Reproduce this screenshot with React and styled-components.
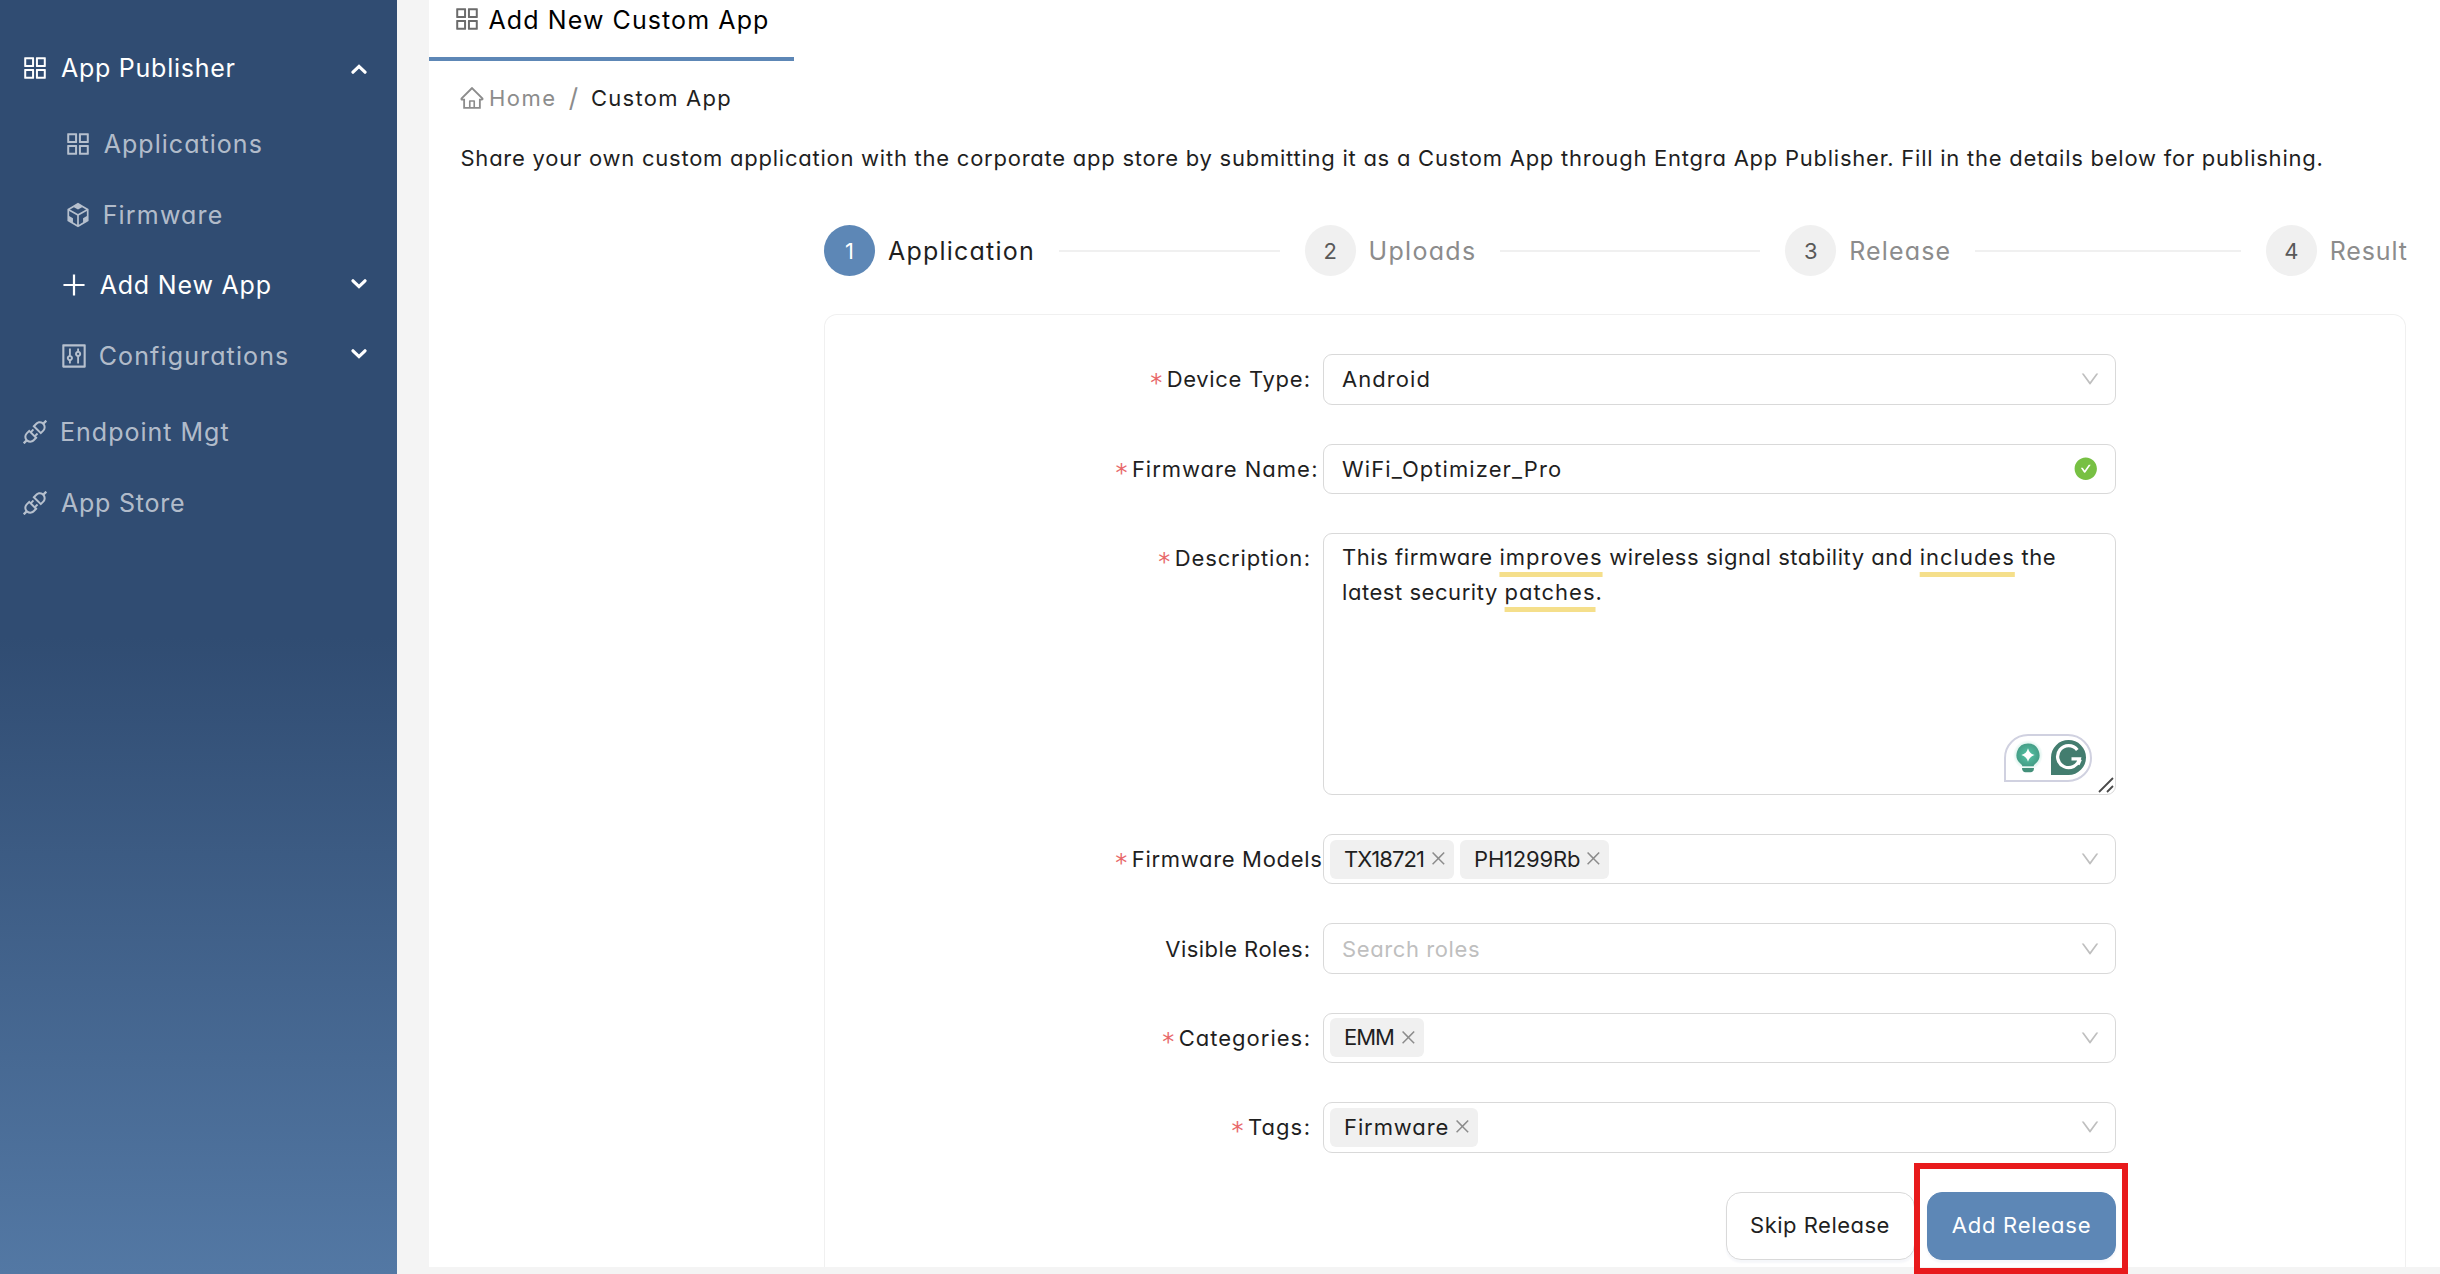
import React from 'react'
import styled, { createGlobalStyle, css } from 'styled-components'
import {
    AiFillCheckCircle,
    AiOutlineApi,
    AiOutlineAppstore,
    AiOutlineClose,
    AiOutlineCodeSandbox,
    AiOutlineControl,
    AiOutlineDown,
    AiOutlineHome,
    AiOutlinePlus,
} from 'react-icons/ai'

const PRIMARY = '#5d87b6'
const TEXT = '#1f1f1f'
const BORDER = '#d9d9d9'
const LIGHT = '#f0f0f0'

const GlobalStyle = createGlobalStyle`
    * {
        box-sizing: border-box;
    }

    body {
        background: #f4f4f4;
        color: ${TEXT};
        font-family: Inter, 'Noto Sans', sans-serif;
        font-feature-settings: 'cv11';
        font-size: 22px;
        line-height: 36px;
        margin: 0;
        overflow: hidden;
    }

    svg {
        display: block;
        flex: none;
    }
`

const Spaced = styled.span`
    letter-spacing: ${({ $ls }) => $ls || 0}px;
    white-space: nowrap;
`

const Layout = styled.div`
    display: flex;
    height: 1274px;
    width: 2440px;
`

const Sidebar = styled.nav`
    background: linear-gradient(180deg, #304c72 0%, #304c72 50%, #5378a4 100%);
    display: flex;
    flex: none;
    flex-direction: column;
    gap: 6.4px;
    padding-top: 35.6px;
    width: 397px;
`

const SubMenu = styled.div`
    display: flex;
    flex-direction: column;
    gap: 6.4px;
    padding: 6.4px 0;
`

const MenuItem = styled.div`
    align-items: center;
    color: ${({ $active }) => ($active ? '#fff' : 'rgba(255, 255, 255, 0.65)')};
    display: flex;
    font-size: 25px;
    gap: ${({ $gap }) => $gap || 11}px;
    height: 64px;
    padding-left: ${({ $indent }) => $indent || 20}px;
    padding-right: 30.5px;
`

const Arrow = styled.svg`
    color: #fff;
    margin-left: auto;
    ${({ $up }) =>
        $up
            ? css`
                  margin-top: 2px;
              `
            : css`
                  margin-bottom: 3px;
                  transform: rotate(180deg);
              `}
`

const Page = styled.main`
    background: #fff;
    display: flex;
    flex: 1;
    flex-direction: column;
    height: 1267px;
    margin-left: 32px;
`

const Tab = styled.div`
    align-items: center;
    border-bottom: 4px solid ${PRIMARY};
    color: #000;
    display: flex;
    font-size: 25px;
    gap: 6.5px;
    height: 61px;
    padding: 0 0 18px 23px;
    width: 365px;

    svg {
        color: #6b6b6b;
        margin-bottom: 1px;
    }
`

const Breadcrumb = styled.div`
    align-items: center;
    color: #8c8c8c;
    display: flex;
    height: 36px;
    margin: 19px 0 0 30px;

    svg {
        margin-right: 4px;
    }

    b {
        color: ${TEXT};
        font-weight: 400;
    }
`

const Slash = styled.span`
    font-size: 26px;
    margin: 0 13px 0 12px;
`

const Intro = styled.p`
    margin: 24px 0 0 31.5px;
`

const Steps = styled.div`
    display: grid;
    grid-template-columns: repeat(3, 480.6px) auto;
    height: 51px;
    margin: 49px 0 0 395px;
`

const Step = styled.div`
    align-items: center;
    color: ${({ $active }) => ($active ? TEXT : '#8c8c8c')};
    display: flex;
    font-size: 25px;
`

const StepNumber = styled.div`
    align-items: center;
    background: ${({ $active }) => ($active ? PRIMARY : LIGHT)};
    border-radius: 50%;
    color: ${({ $active }) => ($active ? '#fff' : '#595959')};
    display: flex;
    flex: none;
    font-size: 22px;
    height: 51px;
    justify-content: center;
    margin-right: 13px;
    width: 51px;
`

const StepLine = styled.div`
    background: ${LIGHT};
    flex: 1;
    height: 2px;
    margin: 0 25px 0 24px;
`

const Card = styled.section`
    border: 1px solid ${LIGHT};
    border-bottom: 0;
    border-radius: 13px 13px 0 0;
    display: flex;
    flex: 1;
    flex-direction: column;
    gap: 39px;
    margin: 38px 34px 0 395px;
    padding-top: 39.2px;
`

const FormRow = styled.div`
    display: flex;
`

const Label = styled.div`
    align-items: center;
    display: flex;
    flex: none;
    height: 50.4px;
    justify-content: flex-end;
    padding-right: ${({ $end }) => $end}px;
    width: 498px;
`

const Required = styled.span`
    color: #e8686a;
    font-family: 'DejaVu Sans', sans-serif;
    font-size: 24px;
    line-height: 24px;
    margin: 8px 4.5px 0 0;
`

const Colon = styled.span`
    margin-left: 0.5px;
`

const Field = styled.div`
    align-items: center;
    border: 1px solid ${BORDER};
    border-radius: 9px;
    display: flex;
    gap: 6px;
    height: 50.4px;
    padding: 0 ${({ $valid }) => ($valid ? 16.5 : 14.5)}px 0 ${({ $tags }) => ($tags ? 6 : 18)}px;
    width: 793px;

    > svg {
        color: ${({ $valid }) => ($valid ? '#77c043' : '#bfbfbf')};
        margin-left: auto;
    }
`

const Placeholder = styled.span`
    color: #bfbfbf;
`

const Tag = styled.span`
    align-items: center;
    background: ${LIGHT};
    border-radius: 6px;
    display: flex;
    height: 39px;
    justify-content: space-between;
    padding: 0 6px 1px 14px;
    width: ${({ $width }) => $width}px;

    svg {
        color: #8c8c8c;
    }
`

const TextArea = styled.div`
    border: 1px solid ${BORDER};
    border-radius: 9px;
    height: 262px;
    letter-spacing: 0.55px;
    line-height: 35px;
    padding: 6.5px 18px;
    position: relative;
    width: 793px;
`

const Hint = styled.span`
    letter-spacing: 1px;
    text-decoration: underline 5px #f5df8b;
    text-decoration-skip-ink: none;
    text-underline-offset: 7px;
`

const Assistant = styled.div`
    align-items: center;
    background: #fff;
    border: 2px solid #d0d1e0;
    border-radius: 24px 24px 24px 0;
    bottom: 12px;
    display: flex;
    height: 48px;
    justify-content: space-between;
    padding: 0 4px 0 7px;
    position: absolute;
    right: 23px;
    width: 88px;
`

const ResizeGrip = styled.svg`
    bottom: 0;
    position: absolute;
    right: 0;
`

const Actions = styled.div`
    display: flex;
    gap: 12.5px;
    justify-content: flex-end;
    width: 1291px;
`

const Button = styled.div`
    align-items: center;
    background: ${({ $primary }) => ($primary ? PRIMARY : '#fff')};
    border: 1px solid ${({ $primary }) => ($primary ? PRIMARY : BORDER)};
    border-radius: 15px;
    box-shadow: 0 3px 2px rgba(5, 55, 120, 0.04);
    color: ${({ $primary }) => ($primary ? '#fff' : TEXT)};
    display: flex;
    height: 68px;
    justify-content: center;
    padding-bottom: 1px;
    width: 189px;
`

const Highlight = styled.div`
    position: relative;

    &::after {
        border: 6px solid #e81a1c;
        content: '';
        inset: -29px -12px -14px -13px;
        position: absolute;
    }
`

const MENU_ARROW = 'M2 8.2L8 2.4L14 8.2'

const MenuArrow = ({ up }) => (
    <Arrow $up={up} width="16" height="10" viewBox="0 0 16 10" fill="none">
        <path d={MENU_ARROW} stroke="currentColor" strokeWidth="3.2" strokeLinecap="round" />
    </Arrow>
)

const BulbIcon = () => (
    <svg width="30" height="36" viewBox="0 0 30 36">
        <defs>
            <radialGradient id="bulb">
                <stop offset="0" stopColor="#55c6a6" />
                <stop offset="1" stopColor="#459e87" />
            </radialGradient>
            <radialGradient id="glow">
                <stop offset="0.7" stopColor="#55c6a6" stopOpacity="0.25" />
                <stop offset="1" stopColor="#55c6a6" stopOpacity="0" />
            </radialGradient>
        </defs>
        <circle cx="15" cy="15" r="15" fill="url(#glow)" />
        <path d="M15 3.5a11.5 11.5 0 0 1 7.6 20.1c-1.2 1-1.6 1.4-1.9 2.6H9.3c-.3-1.2-.7-1.6-1.9-2.6A11.5 11.5 0 0 1 15 3.5z" fill="url(#bulb)" />
        <path d="M15 8.2q1.4 5.4 6.6 6.8q-5.2 1.4-6.6 6.8q-1.4-5.4-6.6-6.8q5.2-1.4 6.6-6.8z" fill="#fff" />
        <path d="M9 28h12c0 2.600-1.400 4.200-3.400 4.200h-5.200C10.400 32.200 9 30.600 9 28z" fill="#43907a" />
    </svg>
)

const AssistantLogo = () => (
    <svg width="35" height="35" viewBox="0 0 35 35" fill="none">
        <path d="M17.500 0A17.500 17.500 0 0 1 17.500 35H0V17.500A17.500 17.500 0 0 1 17.500 0z" fill="#437d6f" />
        <path d="M26.300 9.900A11 11 0 1 0 28.400 18.800H20.500" stroke="#fff" strokeWidth="3.300" />
        <path d="M29.600 19.500L27.300 24.800" stroke="#fff" strokeWidth="2.600" />
    </svg>
)

const FormItem = ({ label, ls, required = true, colon = true, end = 13, children }) => (
    <FormRow>
        <Label $end={end}>
            {required && <Required>*</Required>}
            <Spaced $ls={ls}>{label}</Spaced>
            {colon && <Colon>:</Colon>}
        </Label>
        {children}
    </FormRow>
)

const SelectTag = ({ label, ls, width }) => (
    <Tag $width={width}>
        <Spaced $ls={ls}>{label}</Spaced>
        <AiOutlineClose size={18.75} />
    </Tag>
)

const STEPS = [
    { title: 'Application', ls: 1.22 },
    { title: 'Uploads', ls: 1.3 },
    { title: 'Release', ls: 1.16 },
    { title: 'Result', ls: 0.86 },
]

const App = () => (
    <Layout>
        <GlobalStyle />
        <Sidebar>
            <MenuItem $active>
                <AiOutlineAppstore size={30} />
                <Spaced $ls={0.74}>App Publisher</Spaced>
                <MenuArrow up />
            </MenuItem>
            <SubMenu>
                <MenuItem $indent={62.7}>
                    <AiOutlineAppstore size={30} />
                    <Spaced $ls={1.04}>Applications</Spaced>
                </MenuItem>
                <MenuItem $indent={62.7} $gap={10}>
                    <AiOutlineCodeSandbox size={30} />
                    <Spaced $ls={1.17}>Firmware</Spaced>
                </MenuItem>
                <MenuItem $indent={58.7} $active>
                    <AiOutlinePlus size={30} />
                    <Spaced $ls={0.81}>Add New App</Spaced>
                    <MenuArrow />
                </MenuItem>
                <MenuItem $indent={58.7} $gap={10}>
                    <AiOutlineControl size={30} />
                    <Spaced $ls={1.13}>Configurations</Spaced>
                    <MenuArrow />
                </MenuItem>
            </SubMenu>
            <MenuItem $gap={10}>
                <AiOutlineApi size={30} />
                <Spaced $ls={1.01}>Endpoint Mgt</Spaced>
            </MenuItem>
            <MenuItem>
                <AiOutlineApi size={30} />
                <Spaced $ls={0.77}>App Store</Spaced>
            </MenuItem>
        </Sidebar>
        <Page>
            <Tab>
                <AiOutlineAppstore size={30} />
                <Spaced $ls={1.09}>Add New Custom App</Spaced>
            </Tab>
            <Breadcrumb>
                <AiOutlineHome size={26} />
                <Spaced $ls={1.5}>Home</Spaced>
                <Slash>/</Slash>
                <Spaced as="b" $ls={1.25}>
                    Custom App
                </Spaced>
            </Breadcrumb>
            <Intro>
                <Spaced $ls={0.755}>
                    Share your own custom application with the corporate app store by submitting it as a Custom App
                    through Entgra App Publisher. Fill in the details below for publishing.
                </Spaced>
            </Intro>
            <Steps>
                {STEPS.map(({ title, ls }, i) => (
                    <Step key={title} $active={i === 0}>
                        <StepNumber $active={i === 0}>{i + 1}</StepNumber>
                        <Spaced $ls={ls}>{title}</Spaced>
                        {i < STEPS.length - 1 && <StepLine />}
                    </Step>
                ))}
            </Steps>
            <Card>
                <FormItem label="Device Type" ls={0.68}>
                    <Field>
                        <Spaced $ls={1.07}>Android</Spaced>
                        <AiOutlineDown size={22} />
                    </Field>
                </FormItem>
                <FormItem label="Firmware Name" ls={0.95} end={5.5}>
                    <Field $valid>
                        <Spaced $ls={1.08}>WiFi_Optimizer_Pro</Spaced>
                        <AiFillCheckCircle size={25.5} />
                    </Field>
                </FormItem>
                <FormItem label="Description" ls={0.85}>
                    <TextArea>
                        This firmware <Hint>improves</Hint> wireless signal stability and <Hint>includes</Hint> the
                        <br />
                        latest security <Hint>patches</Hint>.
                        <Assistant>
                            <BulbIcon />
                            <AssistantLogo />
                        </Assistant>
                        <ResizeGrip width="18" height="18" viewBox="0 0 18 18">
                            <path d="M2 16L16 2M10 16L16 10" stroke="#4a4a4a" strokeWidth="1.8" />
                        </ResizeGrip>
                    </TextArea>
                </FormItem>
                <FormItem label="Firmware Models" ls={0.68} colon={false} end={0.5}>
                    <Field $tags>
                        <SelectTag label="TX18721" ls={-0.94} width={124} />
                        <SelectTag label="PH1299Rb" ls={-0.17} width={149} />
                        <AiOutlineDown size={22} />
                    </Field>
                </FormItem>
                <FormItem label="Visible Roles" ls={0.45} required={false}>
                    <Field>
                        <Placeholder>
                            <Spaced $ls={0.6}>Search roles</Spaced>
                        </Placeholder>
                        <AiOutlineDown size={22} />
                    </Field>
                </FormItem>
                <FormItem label="Categories" ls={1.0}>
                    <Field $tags>
                        <SelectTag label="EMM" ls={-1.06} width={94} />
                        <AiOutlineDown size={22} />
                    </Field>
                </FormItem>
                <FormItem label="Tags" ls={1.0}>
                    <Field $tags>
                        <SelectTag label="Firmware" ls={0.9} width={148} />
                        <AiOutlineDown size={22} />
                    </Field>
                </FormItem>
                <Actions>
                    <Button>
                        <Spaced $ls={0.49}>Skip Release</Spaced>
                    </Button>
                    <Highlight>
                        <Button $primary>
                            <Spaced $ls={0.78}>Add Release</Spaced>
                        </Button>
                    </Highlight>
                </Actions>
            </Card>
        </Page>
    </Layout>
)

export default App
